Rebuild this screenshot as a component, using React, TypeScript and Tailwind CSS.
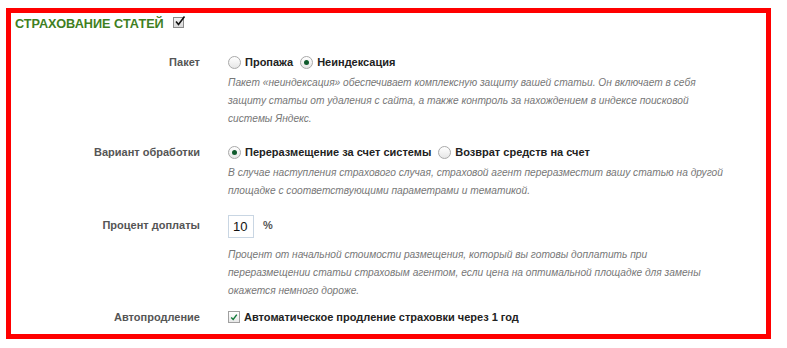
import React from 'react';

const Radio: React.FC<{ checked?: boolean; label: string }> = ({ checked, label }) => (
  <label className="flex items-center gap-[4px] mr-[7px]">
    <span className="w-[13px] h-[13px] rounded-full border border-[#a9a9a9] bg-gradient-to-b from-[#ffffff] to-[#e6e6e6] flex items-center justify-center">
      {checked && <span className="w-[5px] h-[5px] rounded-full bg-[#0f5a2c]" />}
    </span>
    <span className="font-bold text-[11px] text-[#222]">{label}</span>
  </label>
);

const Row: React.FC<{ label: string; className?: string; children: React.ReactNode }> = ({
  label,
  className,
  children,
}) => (
  <div className={`flex ${className || ''}`}>
    <div className="w-[189px] shrink-0 text-right font-bold text-[11px] text-[#555] leading-[20px]">
      {label}
    </div>
    <div className="ml-[28px] flex-1">{children}</div>
  </div>
);

const Desc: React.FC<{ children: React.ReactNode; className?: string }> = ({ children, className }) => (
  <p className={`italic text-[10.2px] leading-[18px] text-[#777] w-[500px] ${className || ''}`}>{children}</p>
);

const App: React.FC = () => {
  return (
    <div className="w-[787px] h-[348px] bg-white pt-[8px] pl-[6px]" style={{ fontFamily: '"Liberation Sans", Arial, sans-serif' }}>
      <div className="w-[765px] h-[331px] border-[5px] border-[#ff0000]">
        {/* title */}
        <div className="flex items-start pl-[4px] pt-[3px]">
          <span className="text-[12.7px] leading-[16px] font-bold text-[#3f7f22] uppercase">
            Страхование статей
          </span>
          <span className="ml-[9px] mt-[1px] w-[11px] h-[11px] border border-[#8a8a8a] bg-gradient-to-b from-[#f4f4f4] to-[#d8d8d8] relative">
            <svg viewBox="0 0 12 12" className="absolute -top-[3px] left-[0px] w-[12px] h-[12px]">
              <path d="M2 6.5 L4.5 9.5 L10.5 1.5" fill="none" stroke="#111" strokeWidth="1.6" />
            </svg>
          </span>
        </div>

        <Row label="Пакет" className="mt-[20px]">
          <div className="flex items-center h-[20px]">
            <Radio label="Пропажа" />
            <Radio checked label="Неиндексация" />
          </div>
          <Desc className="mt-[2px]">
            Пакет «неиндексация» обеспечивает комплексную защиту вашей статьи. Он включает в себя
            защиту статьи от удаления с сайта, а также контроль за нахождением в индексе поисковой
            системы Яндекс.
          </Desc>
        </Row>

        <Row label="Вариант обработки" className="mt-[14px]">
          <div className="flex items-center h-[20px]">
            <Radio checked label="Переразмещение за счет системы" />
            <Radio label="Возврат средств на счет" />
          </div>
          <Desc className="mt-[2px]">
            В случае наступления страхового случая, страховой агент переразместит вашу статью на другой
            площадке с соответствующими параметрами и тематикой.
          </Desc>
        </Row>

        <Row label="Процент доплаты" className="mt-[15px] items-start">
          <div className="flex items-start">
            <div className="w-[26px] h-[23px] border border-[#c9d6e3] bg-white text-[13px] text-[#111] leading-[21px] pl-[4px]">
              10
            </div>
            <span className="ml-[9px] mt-[2px] text-[11px] text-[#555] font-bold">%</span>
          </div>
          <Desc className="mt-[8px]">
            Процент от начальной стоимости размещения, который вы готовы доплатить при
            переразмещении статьи страховым агентом, если цена на оптимальной площадке для замены
            окажется немного дороже.
          </Desc>
        </Row>

        <Row label="Автопродление" className="mt-[7px]">
          <div className="flex items-center h-[20px] gap-[4px]">
            <span className="w-[12px] h-[12px] border border-[#a0a0a0] bg-gradient-to-b from-[#ffffff] to-[#e8e8e8] flex items-center justify-center">
              <svg viewBox="0 0 10 10" className="w-[8px] h-[8px]">
                <path d="M1.5 5.5 L4 8 L8.5 2" fill="none" stroke="#137a3a" strokeWidth="1.8" />
              </svg>
            </span>
            <span className="font-bold text-[11px] text-[#222]">Автоматическое продление страховки через 1 год</span>
          </div>
        </Row>
      </div>
    </div>
  );
};

export default App;
